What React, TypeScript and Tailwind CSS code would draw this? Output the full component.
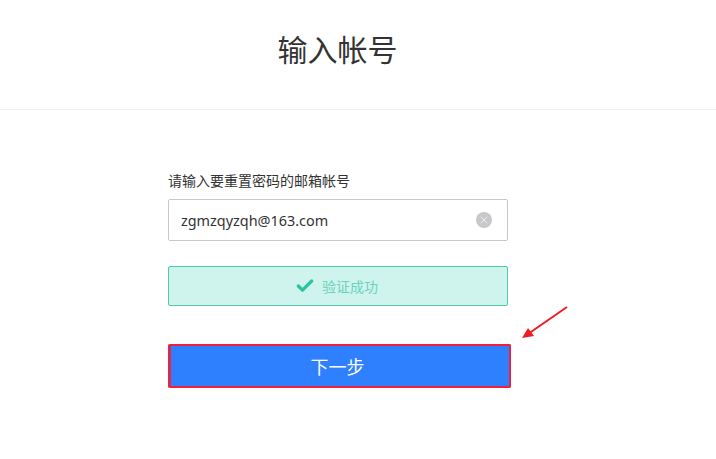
import { Check, X } from "lucide-react";

const cjk = "font-['Noto_Sans_CJK_SC','Noto_Sans',sans-serif]";

export default function App() {
  return (
    <div className={`relative h-[459px] w-[716px] overflow-hidden bg-white ${cjk}`}>
      <header className="h-[110px] border-b border-[#f0f0f0]">
        <h1 className="w-[675px] pt-[26px] text-center text-[30px] leading-[44px] font-normal text-[#333]">
          输入帐号
        </h1>
      </header>

      <main className="ml-[168px] w-[343px] pt-[61px]">
        <p className="text-[14px] leading-[18px] text-[#333]">请输入要重置密码的邮箱帐号</p>

        <div className="mt-[10px] flex h-[42px] w-[340px] items-center justify-between rounded-[2px] border border-[#c8c8c8] pr-[15px] pl-[12px]">
          <span className="pt-[1px] font-['Noto_Sans',sans-serif] text-[14.4px] text-[#333]">zgmzqyzqh@163.com</span>
          <span className="flex h-4 w-4 items-center justify-center rounded-full bg-[#c8c8cc]">
            <X className="h-3 w-3 text-[#eeeeee]" strokeWidth={2} />
          </span>
        </div>

        <div className="mt-[25px] flex h-[40px] w-[340px] items-center justify-center gap-[7px] rounded-[2px] border border-[#4fc8ac] bg-[#cff4ed] pr-[3px]">
          <Check className="h-5 w-5 text-[#2cc3a3]" strokeWidth={4} />
          <span className="text-[14px] text-[#6ad3bb]">验证成功</span>
        </div>

        <button className="mt-[38px] flex h-[44px] w-[343px] items-center justify-center rounded-[2px] border-2 border-l-[3px] border-[#f0203c] border-l-[#e0284f] bg-[#2f80ff] pr-[5px] text-[18px] font-normal text-white">
          下一步
        </button>
      </main>

      {/* annotation arrow */}
      <svg className="absolute top-[305px] left-[520px]" width="50" height="36" viewBox="0 0 50 36">
        <line x1="47" y1="2" x2="8" y2="29" stroke="#ee1c25" strokeWidth="2" />
        <polygon points="2,33 8,23 14,31" fill="#ee1c25" />
      </svg>
    </div>
  );
}
